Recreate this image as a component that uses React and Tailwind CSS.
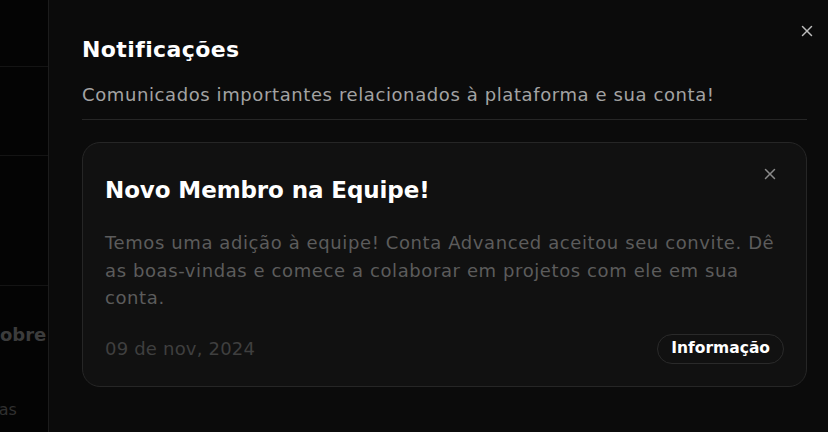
import { X } from "lucide-react";

export default function App() {
  return (
    <div
      className="w-[828px] h-[432px] flex overflow-hidden bg-[#0b0b0b]"
      style={{ fontFamily: '"DejaVu Sans", sans-serif' }}
    >
      {/* Dimmed page behind the drawer */}
      <div className="w-[49px] shrink-0 h-full bg-[#040404] border-r border-[#1c1c1c] overflow-hidden flex flex-col">
        <div className="h-[67px] border-b border-[#141414]"></div>
        <div className="h-[89px] border-b border-[#141414]"></div>
        <div className="h-[130px] border-b border-[#141414]"></div>
        <div className="pt-[35px] -ml-[13px] whitespace-nowrap text-[18px] font-semibold text-[#3c3c3c]">Sobre Nós</div>
        <div className="pt-[50px] -ml-[47px] whitespace-nowrap text-[16px] text-[#303030]">Notícias</div>
      </div>

      {/* Drawer */}
      <div className="flex-1 relative pl-[33px] pr-[21px] pt-[34px]">
        <button className="absolute right-[12px] top-[22px] text-[#bdbdbd]">
          <X size={18} strokeWidth={2} />
        </button>
        <h1 className="text-[22px] leading-[32px] font-bold text-white tracking-[0.4px]">Notificações</h1>
        <p className="mt-[16px] text-[18px] leading-[26px] text-[#a3a3a3] tracking-[0.6px] whitespace-nowrap">
          Comunicados importantes relacionados à plataforma e sua conta!
        </p>
        <div className="mt-[11px] h-px bg-[#262626]"></div>

        <div className="mt-[22px] relative rounded-[18px] border border-[#262626] bg-[#111111] px-[22px] pt-[30px] pb-[22px]">
          <button className="absolute right-[27px] top-[22px] text-[#8a8a8a]">
            <X size={18} strokeWidth={2} />
          </button>
          <h2 className="text-[23px] leading-[34px] font-bold text-white tracking-[-0.1px]">Novo Membro na Equipe!</h2>
          <p className="mt-[22px] text-[18px] leading-[27.5px] text-[#5c5c5c] tracking-[0.6px]">
            Temos uma adição à equipe! Conta Advanced aceitou seu convite. Dê as boas-vindas e comece a colaborar em projetos com ele em sua conta.
          </p>
          <div className="mt-[22px] flex items-center justify-between">
            <span className="text-[18px] text-[#3f3f3f] tracking-[0.2px]">09 de nov, 2024</span>
            <span className="rounded-full border border-[#2a2a2a] px-[13px] h-[30px] flex items-center text-[15.5px] font-bold text-white">
              Informação
            </span>
          </div>
        </div>
      </div>
    </div>
  );
}
